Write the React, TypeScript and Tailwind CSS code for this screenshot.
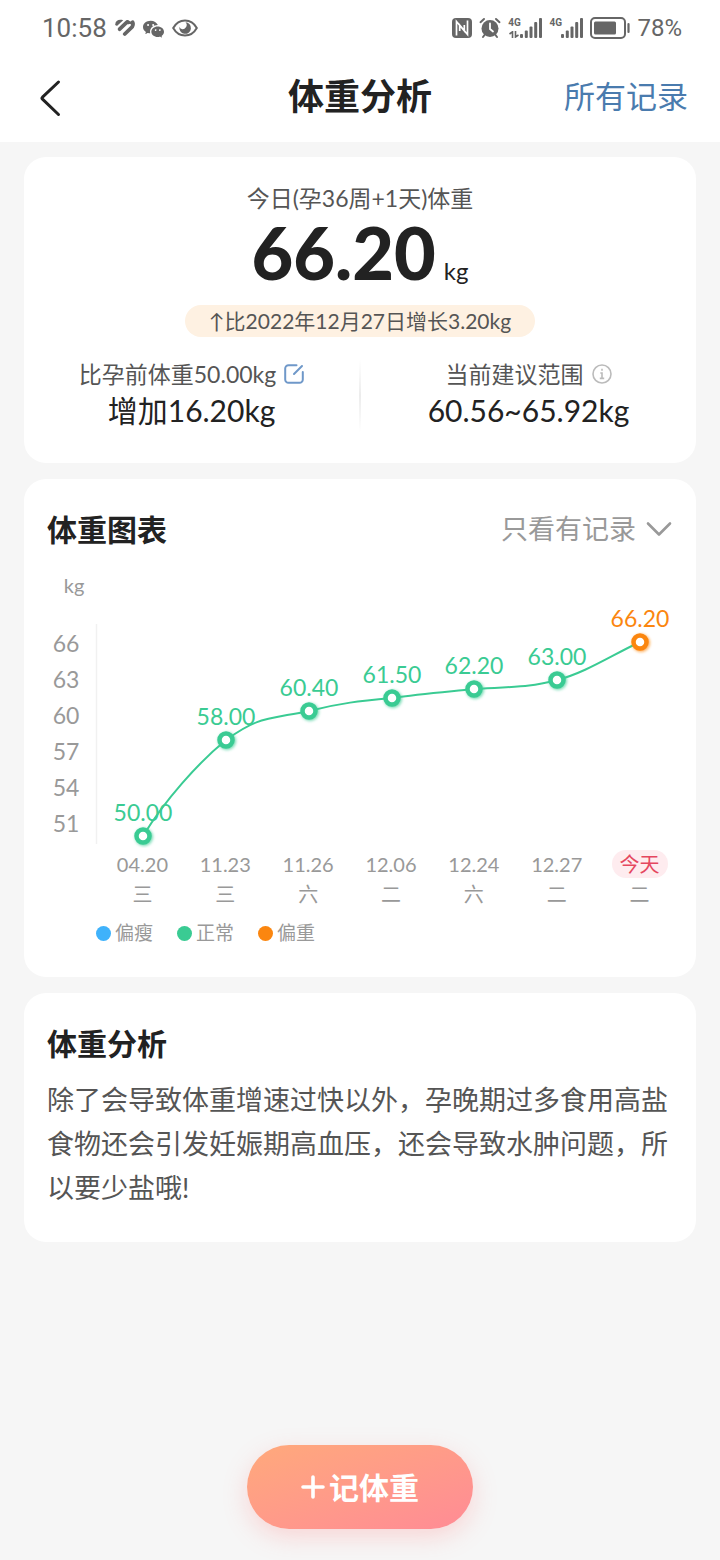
import { ReactNode } from 'react'
import { BsWechat } from 'react-icons/bs'

type Level = 'thin' | 'normal' | 'heavy'

type Entry = {
  date: string
  day: string
  value: string
  x: number
  y: number
  level: Level
  today?: boolean
}

const COLORS: Record<Level, string> = {
  thin: '#3fb2fb',
  normal: '#3acb93',
  heavy: '#fb860f',
}

const ENTRIES: Entry[] = [
  { date: '04.20', day: '三', value: '50.00', x: 119, y: 266, level: 'normal' },
  { date: '11.23', day: '三', value: '58.00', x: 202, y: 170, level: 'normal' },
  { date: '11.26', day: '六', value: '60.40', x: 285, y: 141, level: 'normal' },
  { date: '12.06', day: '二', value: '61.50', x: 368, y: 128, level: 'normal' },
  { date: '12.24', day: '六', value: '62.20', x: 450, y: 119, level: 'normal' },
  { date: '12.27', day: '二', value: '63.00', x: 533, y: 110, level: 'normal' },
  { date: '今天', day: '二', value: '66.20', x: 616, y: 72, level: 'heavy', today: true },
]

const TICKS = [66, 63, 60, 57, 54, 51]

const LEGEND: { label: string; level: Level }[] = [
  { label: '偏瘦', level: 'thin' },
  { label: '正常', level: 'normal' },
  { label: '偏重', level: 'heavy' },
]

/* Status bar */
function Signal() {
  return (
    <svg width="22" height="20" viewBox="0 0 22 20" fill="currentColor" aria-hidden="true">
      <rect x="0" y="16" width="3" height="4" rx="1" />
      <rect x="4.800" y="12.500" width="3" height="7.500" rx="1" />
      <rect x="9.500" y="8.500" width="3" height="11.500" rx="1" />
      <rect x="14.200" y="4" width="3" height="16" rx="1" />
      <rect x="19" y="0" width="3" height="20" rx="1" />
    </svg>
  )
}

function StatusBar() {
  return (
    <div className="flex h-14 items-center justify-between pl-[42px] pr-[38px] text-[#666]">
      <div className="flex items-center gap-2">
        <span className="font-[Roboto,sans-serif] text-[26px] leading-8">10:58</span>
        <svg width="20" height="18" viewBox="0 0 20 18" fill="none" stroke="currentColor" strokeWidth="3.800" strokeLinecap="round" aria-hidden="true">
          <path d="M.300 5.200C.300 1.500 4-.200 8.200 1.200L2.200 6.800Q.500 7 .300 5.200Z" fill="currentColor" stroke="none" />
          <path d="M4.600 10.200 11.400 3.600Q12.800 2.400 13.200 3.400" />
          <path d="M9.800 15 17.200 7.800Q18.600 5.400 17.600 3.200" />
          <path d="M12.200 3 17.200 4.200" strokeWidth="2.600" />
        </svg>
        <BsWechat className="size-[21px]" aria-hidden="true" />
        <svg width="26" height="18" viewBox="0 0 26 18" fill="none" stroke="currentColor" strokeWidth="2" aria-hidden="true">
          <path d="M1.200 9C4 4 8 1.500 13 1.500S22 4 24.800 9C22 14 18 16.500 13 16.500S4 14 1.200 9Z" />
          <path d="M13.500 3.200a5.800 5.800 0 1 1-6 4.500 3.400 3.400 0 0 0 6.200.800 3.600 3.600 0 0 0-.200-5.300Z" fill="currentColor" stroke="none" />
        </svg>
      </div>
      <div className="flex items-center gap-[7px]">
        <svg width="20" height="20" viewBox="0 0 20 20" aria-hidden="true">
          <rect width="20" height="20" rx="4" fill="currentColor" />
          <path d="M4.500 17.500V3.500L12.300 12.800V7M15.500 2.500v14L7.700 7.200V13" fill="none" stroke="#fff" strokeWidth="1.700" />
        </svg>
        <svg width="22" height="22" viewBox="0 0 22 22" fill="none" stroke="currentColor" strokeWidth="2" strokeLinecap="round" aria-hidden="true">
          <circle cx="11" cy="11.500" r="8.500" fill="currentColor" stroke="none" />
          <path d="M1.500 5.200 5 2M20.500 5.200 17 2M5.500 18 4 20M16.500 18l1.500 2" />
          <path d="M11 6.500v5.500l3 2.500" stroke="#fff" strokeWidth="1.800" />
        </svg>
        <div className="flex h-5 items-end">
          <div className="flex h-5 w-3 flex-col items-center justify-between">
            <span className="font-[Roboto,sans-serif] text-[10px] font-bold leading-[10px]">4G</span>
            <svg width="10" height="7" viewBox="0 0 10 7" fill="none" stroke="currentColor" strokeWidth="1.600" aria-hidden="true">
              <path d="M.500 3 3.500.800V7M6.500 0v6L9.500 4" />
            </svg>
          </div>
          <Signal />
        </div>
        <div className="flex h-5 items-end">
          <span className="w-3 self-start font-[Roboto,sans-serif] text-[10px] font-bold leading-[10px]">4G</span>
          <Signal />
        </div>
        <svg width="40" height="22" viewBox="0 0 40 22" fill="none" stroke="currentColor" aria-hidden="true">
          <rect x="1" y="1" width="34" height="20" rx="4" strokeWidth="2" />
          <rect x="4" y="4.500" width="22" height="13" rx="1.500" fill="currentColor" stroke="none" />
          <path d="M38.500 7v8" strokeWidth="2.200" strokeLinecap="round" />
        </svg>
        <span className="font-[Roboto,sans-serif] text-[24px] leading-8">78%</span>
      </div>
    </div>
  )
}

/* Header */
function Header() {
  return (
    <header className="grid grid-cols-3 items-center px-8 pb-5 pt-[14px]">
      <button type="button" aria-label="返回" className="flex h-[52px] w-9 items-center justify-center pt-1">
        <svg width="24" height="38" viewBox="0 0 24 38" fill="none" stroke="#222" strokeWidth="3" strokeLinecap="round" strokeLinejoin="round" aria-hidden="true">
          <path d="M20.500 3 4.500 18.200q-1 1 0 2L20.500 35.500" />
        </svg>
      </button>
      <h1 className="text-center text-[36px] font-bold leading-[52px]">体重分析</h1>
      <a href="#records" className="justify-self-end text-[31px] leading-[52px] text-[#4a7bae]">
        所有记录
      </a>
    </header>
  )
}

function Card({ className, children }: { className: string; children: ReactNode }) {
  return <section className={`rounded-[22px] bg-white ${className}`}>{children}</section>
}

/* Today's weight */
function Summary() {
  return (
    <Card className="pb-[35px] pt-[23px]">
      <p className="text-center text-[23px] leading-9 text-[#555]">今日(孕36周+1天)体重</p>
      <p className="flex items-baseline justify-center gap-2">
        <span className="text-[72px] font-black leading-[72px]">66.20</span>
        <span className="text-[24px]">kg</span>
      </p>
      <div className="mt-4 flex justify-center">
        <p className="rounded-full bg-[#fef1e2] px-6 text-[21px] leading-8 text-[#555]">
          ↑比2022年12月27日增长3.20kg
        </p>
      </div>
      <div className="mt-[19px] grid grid-cols-[1fr_2px_1fr] text-center">
        <div>
          <div className="flex items-center justify-center gap-2 text-[23px] leading-9 text-[#555]">
            比孕前体重50.00kg
            <button type="button" aria-label="修改孕前体重">
              <svg width="20" height="20" viewBox="0 0 20 20" fill="none" stroke="#6f98c9" strokeWidth="2" strokeLinecap="round" aria-hidden="true">
                <path d="M12.500 1.200H4.500A3.300 3.300 0 0 0 1.200 4.500v11a3.300 3.300 0 0 0 3.300 3.300h11a3.300 3.300 0 0 0 3.300-3.300V8M10 10l8-8" />
              </svg>
            </button>
          </div>
          <p className="text-[30px] leading-9">增加16.20kg</p>
        </div>
        <div className="-mb-1 mt-1 bg-linear-to-b from-white via-[#ececec] to-white" />
        <div>
          <div className="flex items-center justify-center gap-2 text-[23px] leading-9 text-[#555]">
            当前建议范围
            <button type="button" aria-label="说明">
              <svg width="20" height="20" viewBox="0 0 20 20" fill="none" stroke="#bbb" strokeWidth="1.600" aria-hidden="true">
                <circle cx="10" cy="10" r="9" />
                <path d="M10 4.800v2M8.300 9H10v5.200M7.800 14.400h4.400" />
              </svg>
            </button>
          </div>
          <p className="text-[30px] leading-9">60.56~65.92kg</p>
        </div>
      </div>
    </Card>
  )
}

/* Weight chart */
function Chart() {
  return (
    <Card className="pb-7 pt-[25px]">
      <div className="flex items-center justify-between pl-[23px] pr-6">
        <h2 className="text-[30px] font-bold leading-[50px]">体重图表</h2>
        <label className="flex items-center gap-[10px] text-[#999]">
          <select aria-label="记录筛选" className="appearance-none bg-transparent text-[27px] leading-[50px]">
            <option>只看有记录</option>
          </select>
          <svg width="26" height="16" viewBox="0 0 26 16" fill="none" stroke="currentColor" strokeWidth="2.600" strokeLinecap="round" strokeLinejoin="round" aria-hidden="true">
            <path d="M2 2.500 13 13.500 24 2.500" />
          </svg>
        </label>
      </div>
      <svg viewBox="0 0 672 278" className="mt-4 block w-full" role="img" aria-label="体重图表">
        <defs>
          <filter id="glow" x="-50%" y="-50%" width="200%" height="200%">
            <feGaussianBlur stdDeviation="1.500" />
          </filter>
        </defs>
        <text x="50" y="23" textAnchor="middle" fontSize="20" fill="#999">kg</text>
        {TICKS.map((tick, i) => (
          <text key={tick} x="42" y={82 + i * 36} textAnchor="middle" fontSize="23" fill="#999">
            {tick}
          </text>
        ))}
        <path d="M72.500 54v220" stroke="#f1f1f1" strokeWidth="1.500" />
        <path
          d="M119 266C141 230 174 193 202 170C234 147 240 150 285 141C316 133 336 131 368 128C396 124 421 122 450 119C496 116 501 118 533 110C561 103 588 85 616 72"
          fill="none"
          stroke={COLORS.normal}
          strokeWidth="2"
        />
        {ENTRIES.map(({ date, value, x, y, level }) => (
          <g key={date}>
            <circle cx={x + 1} cy={y + 1} r="9" fill={COLORS[level]} opacity="0.7" filter="url(#glow)" />
            <circle cx={x} cy={y} r="6.500" fill="#fff" stroke={COLORS[level]} strokeWidth="4.500" />
            <text x={x} y={y - 15} textAnchor="middle" fontSize="23" fill={COLORS[level]}>
              {value}
            </text>
          </g>
        ))}
      </svg>
      <div className="grid grid-cols-7 pl-[77px] pr-[15px] text-center text-[20px] text-[#999]">
        {ENTRIES.map(({ date, day, today }) => (
          <div key={date} className="flex flex-col items-center gap-[2px] pt-[2px]">
            <span className={today ? 'rounded-full bg-[#feecef] px-2 leading-7 text-[#e5475f]' : 'leading-7'}>
              {date}
            </span>
            <span className="leading-7">{day}</span>
          </div>
        ))}
      </div>
      <ul className="mt-[9px] flex gap-6 pl-[72px] text-[19px] leading-8 text-[#999]">
        {LEGEND.map(({ label, level }) => (
          <li key={label} className="flex items-center gap-1">
            <span className="size-[15px] rounded-full" style={{ background: COLORS[level] }} />
            {label}
          </li>
        ))}
      </ul>
    </Card>
  )
}

/* Advice */
function Advice() {
  return (
    <Card className="px-[23px] pb-8 pt-[25px]">
      <h2 className="text-[30px] font-bold leading-[50px]">体重分析</h2>
      <p className="mt-[10px] text-[27px] leading-11 text-[#555]">
        除了会导致体重增速过快以外，孕晚期过多食用高盐食物还会引发妊娠期高血压，还会导致水肿问题，所以要少盐哦!
      </p>
    </Card>
  )
}

export default function App() {
  return (
    <div lang="zh-CN" className="flex min-h-screen flex-col bg-[#f6f6f6] font-[Lato,'Noto_Sans_CJK_SC',sans-serif] text-[#222]">
      <div className="bg-white">
        <StatusBar />
        <Header />
      </div>
      <main className="flex flex-col gap-4 px-6 pb-6 pt-[15px]">
        <Summary />
        <Chart />
        <Advice />
      </main>
      <footer className="mt-auto flex justify-center pb-[31px]">
        <button
          type="button"
          className="flex h-[84px] items-center gap-1 rounded-full bg-linear-to-br from-[#ffa97b] to-[#ff8b95] px-[54px] text-[30px] font-bold text-white shadow-[0_8px_24px_rgba(255,140,140,0.3)]"
        >
          <svg width="24" height="24" viewBox="0 0 24 24" fill="none" stroke="currentColor" strokeWidth="3.600" strokeLinecap="round" aria-hidden="true">
            <path d="M12 2v20M2 12h20" />
          </svg>
          记体重
        </button>
      </footer>
    </div>
  )
}
